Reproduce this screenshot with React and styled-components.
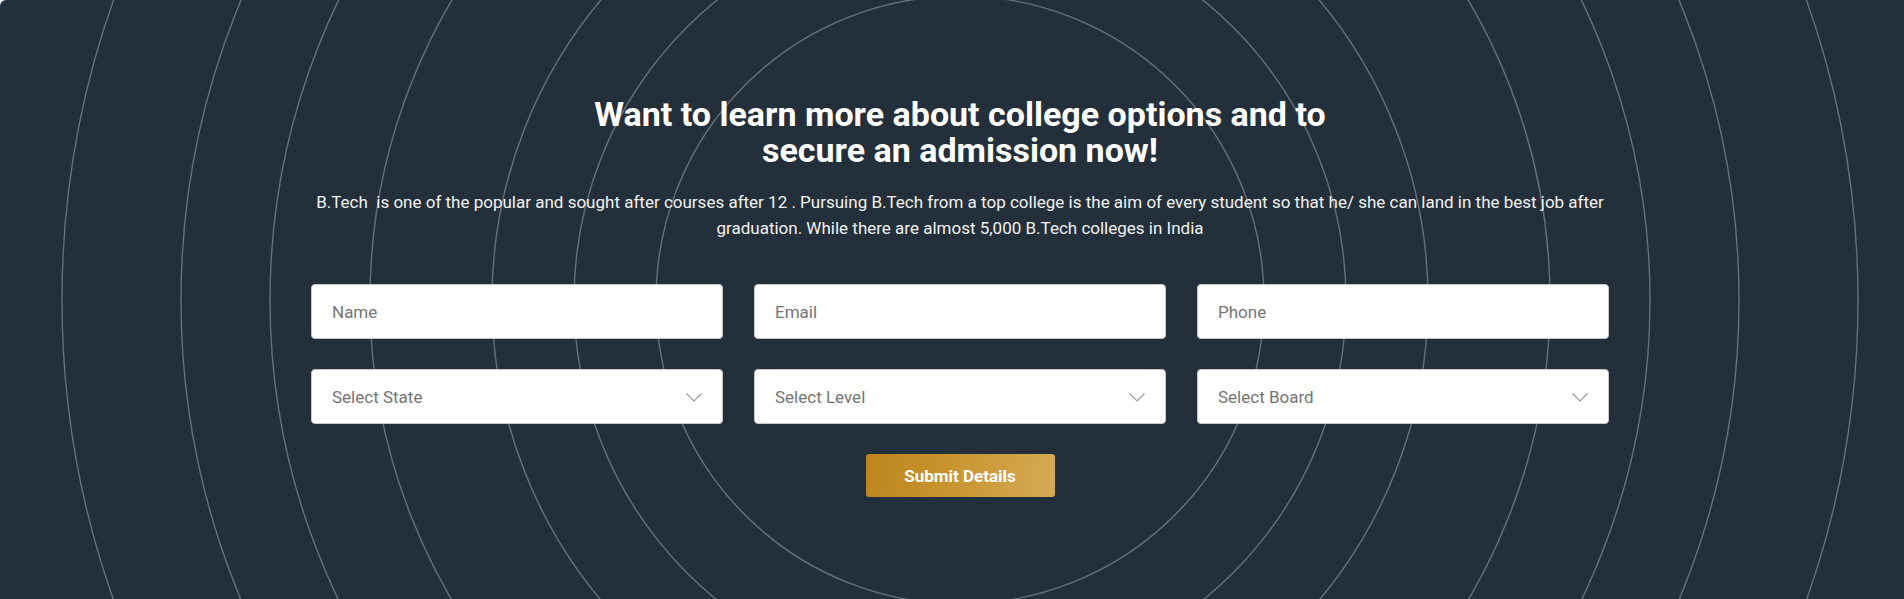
import styled, { createGlobalStyle } from "styled-components";

const GlobalStyle = createGlobalStyle`
  html, body {
    margin: 0;
    padding: 0;
    background: #ffffff;
    overflow: hidden;
  }
  * {
    box-sizing: border-box;
  }
`;

const StyledSection = styled.section`
  position: relative;
  width: 1920px;
  height: 620px;
  background-color: #232f3a;
  border-radius: 6px;
  overflow: hidden;
  font-family: Roboto, "Liberation Sans", sans-serif;
`;

const StyledRings = styled.svg`
  position: absolute;
  top: 0;
  left: 0;
`;

const StyledContent = styled.div`
  position: relative;
  width: 1298px;
  margin: 0 auto;
  padding-top: 96px;
  display: flex;
  flex-direction: column;
  align-items: center;
`;

const StyledHeading = styled.h2`
  max-width: 780px;
  margin: 0;
  color: #ffffff;
  font-size: 34px;
  line-height: 36px;
  font-weight: 700;
  text-align: center;
`;

const StyledText = styled.p`
  margin: 21px 0 0;
  color: #f2f2f2;
  font-size: 17px;
  line-height: 26px;
  text-align: center;
`;

const StyledForm = styled.form`
  width: 100%;
  margin-top: 43px;
  display: grid;
  grid-template-columns: repeat(3, 1fr);
  column-gap: 31px;
  row-gap: 30px;
`;

const StyledInput = styled.input`
  width: 100%;
  height: 55px;
  padding: 0 20px;
  background-color: #ffffff;
  border: 1px solid #c8c8c8;
  border-radius: 4px;
  font-family: inherit;
  font-size: 17px;
  color: #333;
  outline: none;

  &::placeholder {
    color: #757575;
  }
`;

const StyledSelectWrap = styled.div`
  position: relative;
`;

const StyledSelect = styled.select`
  width: 100%;
  height: 55px;
  padding: 0 20px;
  background-color: #ffffff;
  border: 1px solid #c8c8c8;
  border-radius: 4px;
  font-family: inherit;
  font-size: 17px;
  color: #757575;
  appearance: none;
  outline: none;
`;

const StyledChevron = styled.svg`
  position: absolute;
  top: 24px;
  right: 21px;
  pointer-events: none;
`;

const StyledButtonRow = styled.div`
  grid-column: 1 / -1;
  display: flex;
  justify-content: center;
`;

const StyledSubmitButton = styled.button`
  width: 189px;
  height: 43px;
  border: none;
  border-radius: 3px;
  background: linear-gradient(100deg, #bd861d 0%, #c8942f 45%, #d6ab55 100%);
  color: #ffffff;
  font-family: inherit;
  font-size: 17px;
  font-weight: 700;
  cursor: pointer;
`;

const rings = [304, 386, 468, 590, 690, 779, 898];

function Rings() {
  return (
    <StyledRings width="1920" height="620" viewBox="0 0 1920 620">
      {rings.map((r) => (
        <circle
          key={r}
          cx="960"
          cy="300"
          r={r}
          fill="none"
          stroke="#66717b"
          strokeWidth="1.4"
        />
      ))}
    </StyledRings>
  );
}

function Dropdown({ label }) {
  return (
    <StyledSelectWrap>
      <StyledSelect defaultValue="">
        <option value="" disabled>
          {label}
        </option>
      </StyledSelect>
      <StyledChevron width="16" height="9" viewBox="0 0 16 9">
        <polyline
          points="0.5,0.5 8,8 15.5,0.5"
          fill="none"
          stroke="#9a9a9a"
          strokeWidth="1.2"
        />
      </StyledChevron>
    </StyledSelectWrap>
  );
}

export default function App() {
  return (
    <>
      <GlobalStyle />
      <StyledSection>
        <Rings />
        <StyledContent>
          <StyledHeading>
            Want to learn more about college options and to secure an
            admission now!
          </StyledHeading>
          <StyledText>
            B.Tech{"\u00a0"} is one of the popular and sought after courses
            after 12 . Pursuing B.Tech from a top college is the aim of every
            student so that he/ she can land in the best job after graduation.
            While there are almost 5,000 B.Tech colleges in India
          </StyledText>
          <StyledForm onSubmit={(event) => event.preventDefault()}>
            <StyledInput type="text" name="name" placeholder="Name" />
            <StyledInput type="email" name="email" placeholder="Email" />
            <StyledInput type="tel" name="phone" placeholder="Phone" />
            <Dropdown label="Select State" />
            <Dropdown label="Select Level" />
            <Dropdown label="Select Board" />
            <StyledButtonRow>
              <StyledSubmitButton type="submit">Submit Details</StyledSubmitButton>
            </StyledButtonRow>
          </StyledForm>
        </StyledContent>
      </StyledSection>
    </>
  );
}
